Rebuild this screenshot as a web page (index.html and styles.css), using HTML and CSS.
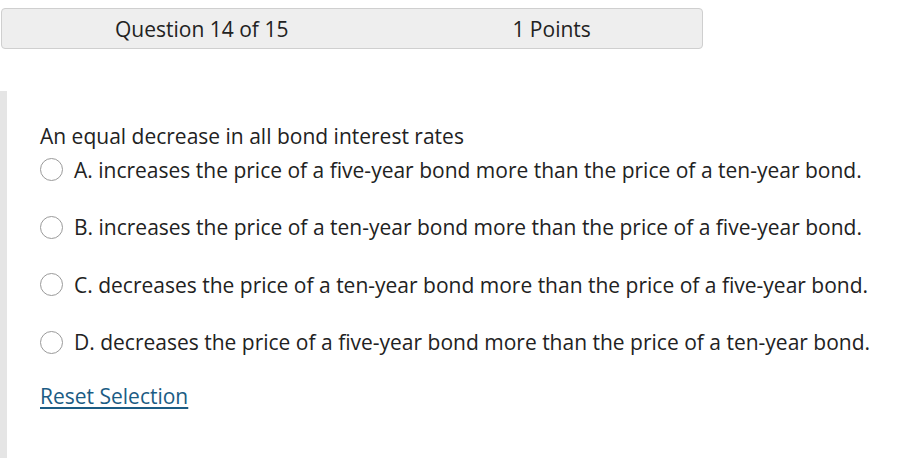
FILE: index.html
```html
<!DOCTYPE html>
<html>
<head>
<meta charset="utf-8">
<link rel="stylesheet" href="styles.css">
</head>
<body>
<div class="header">
  <span class="qnum">Question 14 of 15</span>
  <span class="points">1 Points</span>
</div>
<div class="body">
  <div class="stem">An equal decrease in all bond interest rates</div>
  <ul class="options">
    <li class="option"><span class="radio"></span><span class="label">A. increases the price of a five-year bond more than the price of a ten-year bond.</span></li>
    <li class="option"><span class="radio"></span><span class="label">B. increases the price of a ten-year bond more than the price of a five-year bond.</span></li>
    <li class="option"><span class="radio"></span><span class="label">C. decreases the price of a ten-year bond more than the price of a five-year bond.</span></li>
    <li class="option"><span class="radio"></span><span class="label">D. decreases the price of a five-year bond more than the price of a ten-year bond.</span></li>
  </ul>
  <a class="reset" href="#">Reset Selection</a>
</div>
</body>
</html>
```
FILE: styles.css
```css
html, body {
  margin: 0;
  padding: 0;
  background: #fff;
  overflow: hidden;
}
body {
  font-family: "Open Sans", "Liberation Sans", sans-serif;
  color: #222;
}
.header {
  margin: 8px 0 0 1px;
  width: 700px;
  height: 39px;
  background: #eeeeee;
  border: 1px solid #cfcfcf;
  border-radius: 4px;
  display: flex;
  align-items: center;
  font-size: 21px;
  color: #222;
}
.qnum {
  margin-left: 113px;
}
.points {
  margin-left: 224px;
}
.body {
  margin-top: 42px;
  border-left: 7px solid #e5e5e5;
  padding: 31px 0 0 33px;
  height: 336px;
}
.stem {
  font-size: 21px;
  line-height: 28px;
}
.options {
  list-style: none;
  margin: 0;
  padding: 0;
}
.option {
  display: flex;
  align-items: center;
  height: 57.5px;
  font-size: 21px;
}
.option:first-child {
  margin-top: -9px;
}
.radio {
  width: 23px;
  height: 23px;
  border: 1px solid #9a9a9a;
  border-radius: 50%;
  box-sizing: border-box;
  margin-right: 11px;
  flex: none;
}
.label {
  white-space: nowrap;
}
.reset {
  display: inline-block;
  margin-top: 11px;
  font-size: 21px;
  line-height: 28px;
  color: #1b5c84;
  text-decoration: underline;
  text-underline-offset: 3px;
}
```
